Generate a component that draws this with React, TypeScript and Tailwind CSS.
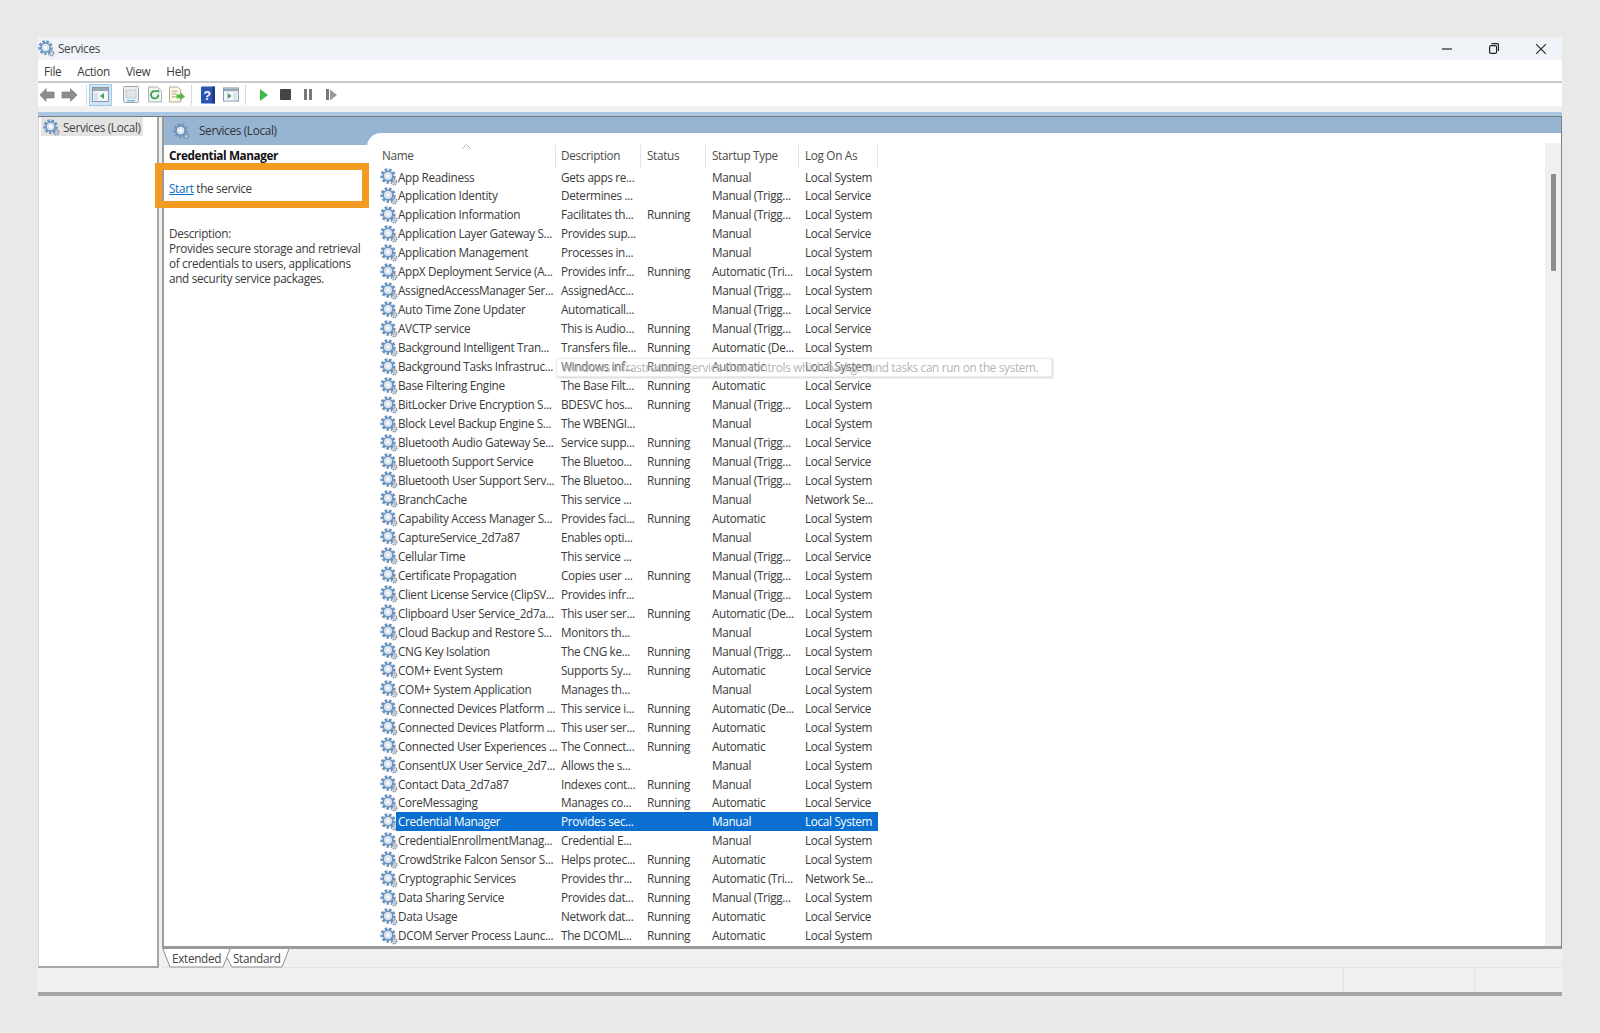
const sans = 'font-["Open_Sans","Noto_Sans",sans-serif]';

type Svc = [string, string, string, string, string];

const services: Svc[] = [
  ['App Readiness', 'Gets apps re...', '', 'Manual', 'Local System'],
  ['Application Identity', 'Determines ...', '', 'Manual (Trigg...', 'Local Service'],
  ['Application Information', 'Facilitates th...', 'Running', 'Manual (Trigg...', 'Local System'],
  ['Application Layer Gateway S...', 'Provides sup...', '', 'Manual', 'Local Service'],
  ['Application Management', 'Processes in...', '', 'Manual', 'Local System'],
  ['AppX Deployment Service (A...', 'Provides infr...', 'Running', 'Automatic (Tri...', 'Local System'],
  ['AssignedAccessManager Ser...', 'AssignedAcc...', '', 'Manual (Trigg...', 'Local System'],
  ['Auto Time Zone Updater', 'Automaticall...', '', 'Manual (Trigg...', 'Local Service'],
  ['AVCTP service', 'This is Audio...', 'Running', 'Manual (Trigg...', 'Local Service'],
  ['Background Intelligent Tran...', 'Transfers file...', 'Running', 'Automatic (De...', 'Local System'],
  ['Background Tasks Infrastruc...', 'Windows inf...', 'Running', 'Automatic', 'Local System'],
  ['Base Filtering Engine', 'The Base Filt...', 'Running', 'Automatic', 'Local Service'],
  ['BitLocker Drive Encryption S...', 'BDESVC hos...', 'Running', 'Manual (Trigg...', 'Local System'],
  ['Block Level Backup Engine S...', 'The WBENGI...', '', 'Manual', 'Local System'],
  ['Bluetooth Audio Gateway Se...', 'Service supp...', 'Running', 'Manual (Trigg...', 'Local Service'],
  ['Bluetooth Support Service', 'The Bluetoo...', 'Running', 'Manual (Trigg...', 'Local Service'],
  ['Bluetooth User Support Serv...', 'The Bluetoo...', 'Running', 'Manual (Trigg...', 'Local System'],
  ['BranchCache', 'This service ...', '', 'Manual', 'Network Se...'],
  ['Capability Access Manager S...', 'Provides faci...', 'Running', 'Automatic', 'Local System'],
  ['CaptureService_2d7a87', 'Enables opti...', '', 'Manual', 'Local System'],
  ['Cellular Time', 'This service ...', '', 'Manual (Trigg...', 'Local Service'],
  ['Certificate Propagation', 'Copies user ...', 'Running', 'Manual (Trigg...', 'Local System'],
  ['Client License Service (ClipSV...', 'Provides infr...', '', 'Manual (Trigg...', 'Local System'],
  ['Clipboard User Service_2d7a...', 'This user ser...', 'Running', 'Automatic (De...', 'Local System'],
  ['Cloud Backup and Restore S...', 'Monitors th...', '', 'Manual', 'Local System'],
  ['CNG Key Isolation', 'The CNG ke...', 'Running', 'Manual (Trigg...', 'Local System'],
  ['COM+ Event System', 'Supports Sy...', 'Running', 'Automatic', 'Local Service'],
  ['COM+ System Application', 'Manages th...', '', 'Manual', 'Local System'],
  ['Connected Devices Platform ...', 'This service i...', 'Running', 'Automatic (De...', 'Local Service'],
  ['Connected Devices Platform ...', 'This user ser...', 'Running', 'Automatic', 'Local System'],
  ['Connected User Experiences ...', 'The Connect...', 'Running', 'Automatic', 'Local System'],
  ['ConsentUX User Service_2d7...', 'Allows the s...', '', 'Manual', 'Local System'],
  ['Contact Data_2d7a87', 'Indexes cont...', 'Running', 'Manual', 'Local System'],
  ['CoreMessaging', 'Manages co...', 'Running', 'Automatic', 'Local Service'],
  ['Credential Manager', 'Provides sec...', '', 'Manual', 'Local System'],
  ['CredentialEnrollmentManag...', 'Credential E...', '', 'Manual', 'Local System'],
  ['CrowdStrike Falcon Sensor S...', 'Helps protec...', 'Running', 'Automatic', 'Local System'],
  ['Cryptographic Services', 'Provides thr...', 'Running', 'Automatic (Tri...', 'Network Se...'],
  ['Data Sharing Service', 'Provides dat...', 'Running', 'Manual (Trigg...', 'Local System'],
  ['Data Usage', 'Network dat...', 'Running', 'Automatic', 'Local Service'],
  ['DCOM Server Process Launc...', 'The DCOML...', 'Running', 'Automatic', 'Local System'],
  ['', '', '', '', ''],
];

const Gear = ({ size = 16 }: { size?: number }) => (
  <svg width={size} height={size} viewBox="0 0 18 18" className="shrink-0">
    <circle cx="8" cy="8" r="6.200" fill="none" stroke="#6d93bd" strokeWidth="3" strokeDasharray="2.600 1.600" />
    <circle cx="8" cy="8" r="4.800" fill="#dfeaf5" stroke="#6d93bd" strokeWidth="1.600" />
    <circle cx="8" cy="8" r="2.300" fill="#fff" stroke="#c4d6e8" strokeWidth="0.800" />
    <circle cx="14" cy="14" r="2.700" fill="none" stroke="#7d8fa5" strokeWidth="1.600" strokeDasharray="1.300 0.800" />
    <circle cx="14" cy="14" r="1.300" fill="#e8eef5" stroke="#7b90a8" strokeWidth="0.600" />
  </svg>
);

const Arrow = ({ flip = false, w }: { flip?: boolean; w: number }) => (
  <svg width={w} height="16" viewBox="0 0 18 16" preserveAspectRatio="none" className={flip ? 'scale-x-[-1]' : ''}>
    <path d="M1 8 8 1.500V5h9v6H8v3.500z" fill="#8d8d8d" stroke="#777" strokeWidth="0.600" />
  </svg>
);

const Toolbar = () => (
  <div className="flex items-center h-[23px] bg-white pl-[1px]">
    <Arrow w={16} />
    <div className="ml-[6px] flex">
      <Arrow flip w={17} />
    </div>
    <div className="w-px h-[20px] bg-[#d9d9d9] ml-[8px]" />
    <div className="flex items-center justify-center ml-[2px] w-[23px] h-[22px] bg-[#cfe6f9] border border-[#9cc9ee]">
      <svg width="17" height="15" viewBox="0 0 17 15">
        <rect x="0.500" y="0.500" width="16" height="14" fill="#f3f6f9" stroke="#8a97a5" />
        <rect x="1" y="1" width="15" height="3" fill="#9aa7b5" />
        <rect x="2" y="5.500" width="4" height="8" fill="#dbe3ea" />
        <path d="M12 6v6L8 9z" fill="#3aa655" />
      </svg>
    </div>
    <svg width="16" height="17" viewBox="0 0 16 17" className="ml-[11px]">
      <rect x="0.500" y="0.500" width="15" height="16" rx="1" fill="#eef1f3" stroke="#9aa3ab" />
      <rect x="3" y="4" width="10" height="8" fill="#dfe5ea" stroke="#aeb6be" strokeWidth="0.600" />
      <rect x="4" y="14" width="8" height="1.400" fill="#6ec1dc" />
    </svg>
    <svg width="14" height="17" viewBox="0 0 15 17" className="ml-[9px]">
      <path d="M.5.500h10l4 4v12H.5z" fill="#f2f4f0" stroke="#a7adb0" />
      <path d="M11.200 8.600a4 4 0 1 1-1.400-2.900" fill="none" stroke="#2f9f46" strokeWidth="1.800" />
      <path d="M9 3.800h3v3z" fill="#2f9f46" />
    </svg>
    <svg width="16" height="17" viewBox="0 0 17 17" className="ml-[7px]">
      <path d="M.5.500h9l3 3v13H.5z" fill="#fbf6e2" stroke="#aaa78f" />
      <path d="M3 5h6M3 8h5M3 11h5" stroke="#a59f7f" />
      <path d="M8 8.500h4V6l5 4.500-5 4.500v-2.500H8z" fill="#56b947" />
    </svg>
    <div className="w-px h-[20px] bg-[#d9d9d9] ml-[6px]" />
    <svg width="14" height="18" viewBox="0 0 15 18" className="ml-[9px]">
      <rect width="15" height="18" rx="1" fill="#2b55b4" />
      <rect x="12" width="3" height="18" fill="#1c3a86" />
      <text x="6.500" y="14" textAnchor="middle" fontSize="13" fontWeight="700" fill="#fff" fontFamily="Liberation Sans, sans-serif">?</text>
    </svg>
    <svg width="16" height="15" viewBox="0 0 17 15" className="ml-[8px]">
      <rect x="0.500" y="0.500" width="16" height="14" fill="#f3f6f9" stroke="#8a97a5" />
      <rect x="1" y="1" width="15" height="3" fill="#9aa7b5" />
      <rect x="11" y="5.500" width="4" height="8" fill="#dbe3ea" />
      <path d="M5 6v6l4-3z" fill="#3aa655" />
    </svg>
    <div className="w-px h-[20px] bg-[#d9d9d9] ml-[6px]" />
    <svg width="8" height="12" viewBox="0 0 8 12" className="ml-[14px]">
      <path d="M0 0v12l8-6z" fill="#3fb94b" />
    </svg>
    <span className="ml-[12px] w-[11px] h-[11px] bg-[#444] rounded-[1px]" />
    <div className="ml-[13px] flex gap-[2px]">
      <span className="w-[3px] h-[11px] bg-[#777]" />
      <span className="w-[3px] h-[11px] bg-[#777]" />
    </div>
    <div className="ml-[14px] flex items-center gap-[1px]">
      <span className="w-[3px] h-[11px] bg-[#777]" />
      <svg width="7" height="12" viewBox="0 0 7 12">
        <path d="M0 .5v11L7 6z" fill="#999" />
      </svg>
    </div>
  </div>
);

const colClass = 'grid grid-cols-[13px_160px_85px_65px_93px_79px]';

const HeaderRow = () => (
  <div className={`${colClass} h-[22.500px] text-[#4b4b4b] relative`}>
    <span className="col-span-2 -ml-[1px] leading-[21px] border-r border-[#e5e5e5]">Name</span>
    <span className="pl-[5px] leading-[21px] border-r border-[#e5e5e5]">Description</span>
    <span className="pl-[6px] leading-[21px] border-r border-[#e5e5e5]">Status</span>
    <span className="pl-[6px] leading-[21px] border-r border-[#e5e5e5]">Startup Type</span>
    <span className="pl-[6px] leading-[21px] border-r border-[#e5e5e5]">Log On As</span>
    <svg width="9" height="5" viewBox="0 0 9 5" className="absolute left-[79px] top-[-1px]">
      <path d="M.5 4.500 4.500.5l4 4" fill="none" stroke="#b5b5b5" />
    </svg>
  </div>
);

const ServiceRow = ({ s }: { s: Svc }) => {
  const selected = s[0] === 'Credential Manager';
  const cell = selected ? 'bg-[#0a6fd0] text-white' : '';
  return (
    <div className={`${colClass} h-[18.980px] leading-[18.980px] whitespace-nowrap`}>
      <span className="flex items-center -ml-[3px]">{s[0] && <Gear size={18} />}</span>
      <span className={`${cell} pl-[2px]`}>{s[0]}</span>
      <span className={`${cell} pl-[5px]`}>{s[1]}</span>
      <span className={`${cell} pl-[6px]`}>{s[2]}</span>
      <span className={`${cell} pl-[6px]`}>{s[3]}</span>
      <span className={`${cell} pl-[6px]`}>{s[4]}</span>
    </div>
  );
};

export default function App() {
  return (
    <div className={`${sans} w-[1600px] h-[1033px] bg-[#e9e9e9] pt-[37px] pl-[38px] text-[11.750px] tracking-[-0.320px] text-[#3a3a3a] overflow-hidden`}>
      <div className="w-[1524px] h-[959px] flex flex-col">
        <div className="h-[23px] bg-[#eff3f8] flex items-center">
          <Gear size={17} />
          <span className="ml-[3px] text-[#444]">Services</span>
          <div className="ml-auto flex items-center gap-[37px] pr-[16px]">
            <svg width="10" height="10" viewBox="0 0 10 10"><path d="M0 5h10" stroke="#222" strokeWidth="1.200" /></svg>
            <svg width="10" height="11" viewBox="0 0 10 11" fill="none" stroke="#222" strokeWidth="1.200">
              <rect x=".6" y="2.600" width="7" height="7.800" rx="1.500" />
              <path d="M2.500.6H8a1.500 1.500 0 0 1 1.500 1.500V8" />
            </svg>
            <svg width="10" height="10" viewBox="0 0 10 10"><path d="M0 0l10 10M10 0 0 10" stroke="#222" strokeWidth="1.100" /></svg>
          </div>
        </div>
        <div className="h-[23px] bg-white border-b-2 border-[#c9c9c9] flex items-center gap-[16px] pl-[6px] pt-[2px]">
          <span>File</span>
          <span>Action</span>
          <span>View</span>
          <span>Help</span>
        </div>
        <Toolbar />
        <div className="h-[6px] bg-[#f0f0f0]" />
        <div className="h-[4px] bg-[#a9c6e4]" />
        <div className="h-px bg-[#7b7b7b]" />

        <div className="flex-1 flex min-h-0">
          <div className="w-[121px] bg-white border-r-2 border-b-2 border-l border-[#a5a5a5] border-l-[#d9d9d9] pl-[2px]">
            <div className="h-[19px] w-[102px] bg-[#e3e3e3] flex items-center pl-[2px] pt-[2px] gap-[3px] text-[#444] whitespace-nowrap">
              <Gear size={17} />
              <span>Services (Local)</span>
            </div>
          </div>

          <div className="w-[3px] bg-[#f0f0f0]" />

          <div className="flex-1 flex flex-col min-w-0 bg-[#f0f0f0]">
            <div className="h-[832px] bg-white border-l-2 border-r border-b-[3px] border-[#9a9a9a] border-r-[#808080] flex flex-col relative">
              <div className="h-[16px] bg-[#97b4d3] shrink-0 flex">
                <div className="flex items-center pl-[9px] gap-[9px] h-[28px] w-[203px] text-[#333] shrink-0 bg-[#97b4d3] relative z-10">
                  <Gear size={17} />
                  <span>Services (Local)</span>
                </div>
              </div>

              <div className="flex-1 flex min-h-0">
                <div className="w-[203px] shrink-0 pl-[5px] pt-[11px] text-[#3a3a3a]">
                  <p className="font-bold tracking-[-0.400px] text-[#111] leading-[16px] mt-[3px]">Credential Manager</p>
                  <p className="mt-[17px] leading-[16px]">
                    <span className="text-[#0b6bc5] underline">Start</span> the service
                  </p>
                  <p className="mt-[30px] leading-[15px]">Description:</p>
                  <p className="leading-[15px] whitespace-nowrap">
                    Provides secure storage and retrieval
                    <br />
                    of credentials to users, applications
                    <br />
                    and security service packages.
                  </p>
                </div>

                <div className="flex-1 min-w-0 flex">
                  <div className="flex-1 min-w-0 bg-[#97b4d3]">
                    <div className="h-full bg-white rounded-tl-[14px] pl-[16px] pt-[12px] overflow-hidden relative">
                      <HeaderRow />
                      {services.map((s, i) => (
                        <ServiceRow key={i} s={s} />
                      ))}
                      <div className="absolute left-[189px] top-[225px] h-[19px] w-[496px] border border-[#ececec] bg-white/20 shadow-[1px_1px_2px_rgba(0,0,0,0.18)] pl-[5px] text-[#b5b5b5] leading-[17px] whitespace-nowrap">
                        Windows infrastructure service that controls which background tasks can run on the system.
                      </div>
                    </div>
                  </div>
                  <div className="w-[16px] bg-[#f0f0f0] mt-[10px] shrink-0 flex justify-center pt-[31px]">
                    <div className="w-[5px] h-[97px] bg-[#8c8c8c] rounded-[1px]" />
                  </div>
                </div>
              </div>

              <div className="absolute left-[-9px] top-[46px] w-[214px] h-[45px] border-[7px] border-[#f39a22] z-20" />
            </div>

            <div className="h-[19px] flex items-start text-[#444] border-b border-[#e6e6e6]">
              <svg width="128" height="19" viewBox="0 0 128 19" className="shrink-0 ml-px">
                <path d="M0 0 7 18H60L67 0ZM64 9 69 18H119L126 0H67Z" fill="#fff" />
                <path d="M0 0 7 18H60L67 0M64 9 69 18H119L126 0" fill="none" stroke="#8f8f8f" />
                <text x="9" y="14" fontSize="11.750" fill="#444" fontFamily="Open Sans, sans-serif" letterSpacing="-0.320">Extended</text>
                <text x="70" y="14" fontSize="11.750" fill="#444" fontFamily="Open Sans, sans-serif" letterSpacing="-0.320">Standard</text>
              </svg>
            </div>
          </div>
        </div>

        <div className="h-[24px] bg-[#f0f0f0] flex justify-end shrink-0">
          <div className="w-[132px] border-l border-r border-[#e3e3e3]" />
          <div className="w-[87px]" />
        </div>
        <div className="h-[4px] bg-[#a5a5a5] shrink-0" />
      </div>
    </div>
  );
}
